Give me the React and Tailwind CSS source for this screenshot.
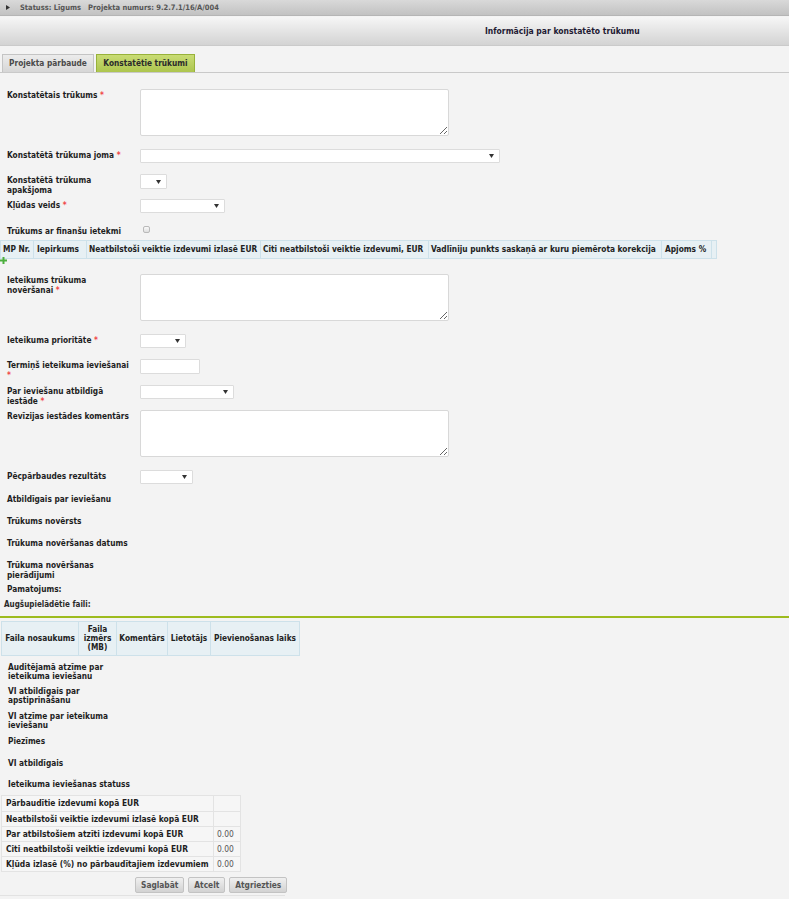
import React from "react";

function Sel({ w, h = "h-[14px]" }) {
  return (
    <div className={`relative bg-white border border-[#dcdcdc] rounded-[1px] ${w} ${h}`}>
      <svg className="absolute right-[5px] top-1/2 -translate-y-1/2" width="5" height="4" viewBox="0 0 5 4">
        <path d="M0 0H5L2.5 4Z" fill="#333" />
      </svg>
    </div>
  );
}

function TA() {
  return (
    <textarea
      readOnly
      className="block w-[309px] h-[47px] bg-white border border-[#d8d8d8] rounded-[2px] resize-y outline-none"
    />
  );
}

function Star() {
  return <span className="text-[#f04848]"> *</span>;
}

function Row({ label, mt, children }) {
  return (
    <div className={`flex items-start pl-[7px] ${mt}`}>
      <div className="w-[133px] shrink-0 text-[8.25px] leading-[10px] font-bold text-[#1e1e1e] whitespace-nowrap pt-[1px]">
        {label}
      </div>
      {children}
    </div>
  );
}

function TextRow({ mt, children }) {
  return (
    <div className={`pl-[7px] text-[8.25px] leading-[10px] font-bold text-[#1e1e1e] whitespace-nowrap ${mt}`}>
      {children}
    </div>
  );
}

function Label2({ mt, children }) {
  return (
    <div className={`pl-[8px] text-[8.25px] leading-[9px] font-bold text-[#1e1e1e] whitespace-nowrap ${mt}`}>
      {children}
    </div>
  );
}

export default function App() {
  const sumRows = [
    ["Pārbaudītie izdevumi kopā EUR", ""],
    ["Neatbilstoši veiktie izdevumi izlasē kopā EUR", ""],
    ["Par atbilstošiem atzīti izdevumi kopā EUR", "0.00"],
    ["Citi neatbilstoši veiktie izdevumi kopā EUR", "0.00"],
    ["Kļūda izlasē (%) no pārbaudītajiem izdevumiem", "0.00"],
  ];
  return (
    <div className="min-h-screen w-full bg-[#f3f3f3] font-['DejaVu_Sans_Condensed','DejaVu_Sans',sans-serif] text-[#1e1e1e] overflow-hidden">
      {/* status bar */}
      <div className="h-[16px] flex items-center bg-gradient-to-b from-[#d9d9d9] to-[#c2c2c2] border-b border-[#b5b5b5]">
        <svg className="ml-[6px]" width="4" height="5" viewBox="0 0 4 5">
          <path d="M0 0L4 2.5L0 5Z" fill="#333" />
        </svg>
        <span className="ml-[10px] text-[7.5px] font-bold text-[#555] whitespace-nowrap">Statuss: Līgums</span>
        <span className="ml-[7px] text-[7.5px] font-bold text-[#555] whitespace-nowrap">Projekta numurs: 9.2.7.1/16/A/004</span>
      </div>
      {/* title band */}
      <div className="mt-[1px] h-[29px] flex items-center bg-gradient-to-b from-[#f6f6f6] to-[#d3d3d3] border-b border-[#cacaca]">
        <span className="ml-[485px] text-[8.5px] font-bold text-[#1f1a33] whitespace-nowrap">Informācija par konstatēto trūkumu</span>
      </div>
      {/* tabs */}
      <div className="h-[27px] flex items-end border-b border-[#c9c9c9] pl-[2px] gap-[2px]">
        <div className="h-[18px] w-[92px] flex items-center justify-center bg-gradient-to-b from-[#ececec] to-[#d6d6d6] border border-b-0 border-[#c4c4c4] text-[8.25px] font-bold text-[#4a4a4a] whitespace-nowrap">
          Projekta pārbaude
        </div>
        <div className="h-[18px] w-[99px] flex items-center justify-center bg-gradient-to-b from-[#c9dc74] to-[#adc54e] border border-b-0 border-[#98b23a] text-[8.25px] font-bold text-[#2b2b2b] whitespace-nowrap">
          Konstatētie trūkumi
        </div>
      </div>

      <Row mt="mt-[16px]" label={<>Konstatētais trūkums<Star /></>}>
        <TA />
      </Row>
      <Row mt="mt-[13px]" label={<>Konstatētā trūkuma joma<Star /></>}>
        <Sel w="w-[360px]" />
      </Row>
      <Row mt="mt-[11px]" label={<>Konstatētā trūkuma<br />apakšjoma</>}>
        <Sel w="w-[27px]" h="h-[15px]" />
      </Row>
      <Row mt="mt-[4px]" label={<>Kļūdas veids<Star /></>}>
        <Sel w="w-[85px]" />
      </Row>
      <Row mt="mt-[12px]" label={<>Trūkums ar finanšu ietekmi</>}>
        <div className="ml-[3px] mt-[1px] w-[7px] h-[7px] rounded-[2px] border border-[#b9b9b9] bg-gradient-to-b from-[#fafafa] to-[#dedede]" />
      </Row>

      {/* finance table header */}
      <div className="mt-[4px] flex w-[717px] h-[19px] bg-[#e7f0f4] border border-[#cde1ea] text-[8.3px] font-bold text-[#222] items-stretch whitespace-nowrap">
        <div className="w-[33px] flex items-center pl-[2px] border-r border-[#cde1ea]">MP Nr.</div>
        <div className="w-[53px] flex items-center pl-[3px] border-r border-[#cde1ea]">Iepirkums</div>
        <div className="w-[174px] flex items-center pl-[2px] border-r border-[#cde1ea]">Neatbilstoši veiktie izdevumi izlasē EUR</div>
        <div className="w-[168px] flex items-center pl-[2px] border-r border-[#cde1ea]">Citi neatbilstoši veiktie izdevumi, EUR</div>
        <div className="w-[233px] flex items-center pl-[2px] border-r border-[#cde1ea]">Vadlīniju punkts saskaņā ar kuru piemērota korekcija</div>
        <div className="w-[50px] flex items-center pl-[3px] border-r border-[#cde1ea]">Apjoms %</div>
        <div className="flex-1" />
      </div>
      <div className="-mt-[2px] h-[7px]">
        <svg width="7" height="7" viewBox="0 0 7 7">
          <path d="M2.5 0H4.5V2.5H7V4.5H4.5V7H2.5V4.5H0V2.5H2.5Z" fill="#4caf3e" />
        </svg>
      </div>

      <Row mt="mt-[10px]" label={<>Ieteikums trūkuma<br />novēršanai<Star /></>}>
        <TA />
      </Row>
      <Row mt="mt-[13px]" label={<>Ieteikuma prioritāte<Star /></>}>
        <Sel w="w-[46px]" />
      </Row>
      <Row mt="mt-[11px]" label={<>Termiņš ieteikuma ieviešanai<br /><span className="text-[#f04848]">*</span></>}>
        <div className="w-[60px] h-[15px] bg-white border border-[#dcdcdc] rounded-[1px]" />
      </Row>
      <Row mt="mt-[5px]" label={<>Par ieviešanu atbildīgā<br />iestāde<Star /></>}>
        <Sel w="w-[94px]" />
      </Row>
      <Row mt="mt-[4px]" label={<>Revīzijas iestādes komentārs</>}>
        <TA />
      </Row>
      <Row mt="mt-[13px]" label={<>Pēcpārbaudes rezultāts</>}>
        <Sel w="w-[53px]" />
      </Row>

      <TextRow mt="mt-[10px]">Atbildīgais par ieviešanu</TextRow>
      <TextRow mt="mt-[12px]">Trūkums novērsts</TextRow>
      <TextRow mt="mt-[12px]">Trūkuma novēršanas datums</TextRow>
      <TextRow mt="mt-[12px]">Trūkuma novēršanas<br />pierādījumi</TextRow>
      <TextRow mt="mt-[4px]">Pamatojums:</TextRow>

      <div className="mt-[6px] pl-[4px] text-[8px] leading-[10px] text-[#2a2a2a] font-bold whitespace-nowrap">
        Augšupielādētie faili:
      </div>
      <div className="mt-[6px] h-[2px] bg-[#9dbb1e]" />

      {/* files table */}
      <div className="mt-[3px] ml-[1px] flex w-[299px] h-[35px] bg-[#e7f0f4] border border-[#cde1ea] text-[8.25px] leading-[9px] font-bold text-[#222] whitespace-nowrap">
        <div className="w-[77px] flex items-center justify-center border-r border-[#cde1ea]">Faila nosaukums</div>
        <div className="w-[38px] flex items-center justify-center text-center border-r border-[#cde1ea]">Faila<br />izmērs<br />(MB)</div>
        <div className="w-[51px] flex items-center justify-center border-r border-[#cde1ea]">Komentārs</div>
        <div className="w-[43px] flex items-center justify-center border-r border-[#cde1ea]">Lietotājs</div>
        <div className="flex-1 flex items-center justify-center">Pievienošanas laiks</div>
      </div>

      <Label2 mt="mt-[7px]">Auditējamā atzīme par<br />ieteikuma ieviešanu</Label2>
      <Label2 mt="mt-[6px]">VI atbildīgais par<br />apstiprināšanu</Label2>
      <Label2 mt="mt-[7px]">VI atzīme par ieteikuma<br />ieviešanu</Label2>
      <Label2 mt="mt-[7px]">Piezīmes</Label2>
      <Label2 mt="mt-[13px]">VI atbildīgais</Label2>
      <Label2 mt="mt-[12px]">Ieteikuma ieviešanas statuss</Label2>

      {/* summary table */}
      <div className="mt-[6px] ml-[1px] w-[240px] border border-[#e3e3e3] bg-[#f6f6f6]">
        {sumRows.map(([l, v], i) => (
          <div key={i} className={`flex h-[15px] ${i > 0 ? "border-t border-[#e3e3e3]" : ""}`}>
            <div className="w-[212px] flex items-center pl-[4px] text-[8.4px] font-bold text-[#1e1e1e] whitespace-nowrap border-r border-[#e3e3e3]">{l}</div>
            <div className="flex-1 flex items-center pl-[3px] text-[8.4px] text-[#555]">{v}</div>
          </div>
        ))}
      </div>

      {/* buttons */}
      <div className="mt-[5px] flex gap-[4px] pl-[135px]">
        {["Saglabāt", "Atcelt", "Atgriezties"].map((b) => (
          <div key={b} className="h-[16px] px-[5px] flex items-center bg-gradient-to-b from-[#f0f0f0] to-[#d2d2d2] border border-[#c3c3c3] rounded-[2px] text-[8.3px] font-bold text-[#555] whitespace-nowrap">
            {b}
          </div>
        ))}
      </div>
      <div className="mt-[2px] w-[285px] border-t border-[#e2e2e2] h-[10px]" />
    </div>
  );
}
